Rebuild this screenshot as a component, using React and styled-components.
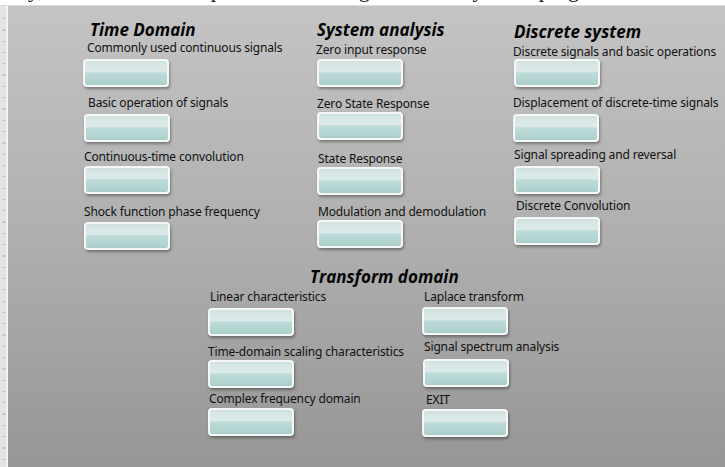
import styled, { createGlobalStyle } from "styled-components";

const GlobalStyle = createGlobalStyle`
  html, body {
    margin: 0;
    padding: 0;
    background: #ffffff;
  }
  body {
    font-family: "Noto Sans", "Liberation Sans", sans-serif;
  }
`;

const Page = styled.div`
  width: 725px;
  height: 467px;
  display: flex;
  flex-direction: column;
  overflow: hidden;
`;

// strip of document text cut off above the panel
const DocStrip = styled.div`
  height: 5px;
  flex: none;
  overflow: hidden;
  background: #ffffff;
  border-bottom: 1px solid #d9d9d9;
`;

const DocLine = styled.div`
  font-family: "Liberation Serif", serif;
  font-size: 22px;
  line-height: 22px;
  margin-top: -21px;
  margin-left: 22px;
  white-space: nowrap;
  word-spacing: 8px;
  color: #111;
`;

const Body = styled.div`
  flex: 1;
  display: flex;
  min-height: 0;
`;

const Ruler = styled.div`
  width: 6px;
  flex: none;
  border-right: 2px solid #f3f3f3;
  background:
    repeating-linear-gradient(
      to bottom,
      transparent 0px,
      transparent 10px,
      #c9c9c9 10px,
      #c9c9c9 11.3px
    ) 2px 2px / 4px 100% no-repeat,
    #e4e4e4;
`;

const Panel = styled.div`
  flex: 1;
  background: linear-gradient(to bottom, #c4c4c4 0%, #afafaf 50%, #969696 100%);
  padding: 14px 0 0 0;
  display: flex;
  flex-direction: column;
`;

const TopGrid = styled.div`
  display: grid;
  grid-template-columns: 233px 197px auto;
  padding-left: 75px;
`;

const Column = styled.div`
  display: flex;
  flex-direction: column;
  align-items: flex-start;
`;

const Title = styled.div`
  font-family: "Open Sans", "Liberation Sans", sans-serif;
  font-weight: 700;
  font-style: italic;
  font-size: 17px;
  line-height: 20px;
  color: #050505;
  white-space: nowrap;
  margin-left: ${(p) => p.$ml || 0}px;
  margin-top: ${(p) => p.$mt || 0}px;
`;

const Item = styled.div`
  display: flex;
  flex-direction: column;
  align-items: flex-start;
  margin-top: ${(p) => p.$mt}px;
`;

const Label = styled.div`
  font-size: 12px;
  line-height: 14px;
  letter-spacing: -0.15px;
  color: #111;
  white-space: nowrap;
  margin-left: ${(p) => p.$lx}px;
`;

const PanelButton = styled.button`
  box-sizing: border-box;
  width: 86px;
  height: 28px;
  padding: 0;
  margin-top: ${(p) => p.$gap}px;
  margin-left: ${(p) => p.$bx}px;
  border: 2px solid #f6f8f8;
  border-radius: 4px;
  background: linear-gradient(
    to bottom,
    #cfe1df 0%,
    #d8e8e6 20%,
    #dbeae8 44%,
    #bddbd8 50%,
    #b2d4d1 85%,
    #a9cdca 100%
  );
  box-shadow: 1px 2px 3px rgba(0, 0, 0, 0.35);
  cursor: pointer;
`;

const TransformSection = styled.div`
  margin-top: 17px;
  padding-left: 200px;
`;

const TransformGrid = styled.div`
  display: grid;
  grid-template-columns: 214px auto;
`;

const timeDomain = [
  { label: "Commonly used continuous signals", mt: 1, gap: 4, lx: 4, bx: 0 },
  { label: "Basic operation of signals", mt: 9, gap: 4, lx: 5, bx: 1 },
  { label: "Continuous-time convolution", mt: 8, gap: 2, lx: 1, bx: 1 },
  { label: "Shock function phase frequency", mt: 11, gap: 3, lx: 1, bx: 1 },
];

const systemAnalysis = [
  { label: "Zero input response", mt: 3, gap: 2, lx: 0, bx: 1 },
  { label: "Zero State Response", mt: 10, gap: 1, lx: 1, bx: 1 },
  { label: "State Response", mt: 12, gap: 1, lx: 2, bx: 1 },
  { label: "Modulation and demodulation", mt: 10, gap: 1, lx: 2, bx: 1 },
];

const discreteSystem = [
  { label: "Discrete signals and basic operations", mt: 3, gap: 0, lx: 0, bx: 1 },
  { label: "Displacement of discrete-time signals", mt: 9, gap: 4, lx: 0, bx: 0 },
  { label: "Signal spreading and reversal", mt: 6, gap: 4, lx: 1, bx: 1 },
  { label: "Discrete Convolution", mt: 5, gap: 4, lx: 3, bx: 1 },
];

const transformLeft = [
  { label: "Linear characteristics", mt: 3, gap: 4, lx: 2, bx: 0 },
  { label: "Time-domain scaling characteristics", mt: 9, gap: 1, lx: 0, bx: 0 },
  { label: "Complex frequency domain", mt: 4, gap: 2, lx: 1, bx: 0 },
];

const transformRight = [
  { label: "Laplace transform", mt: 3, gap: 3, lx: 2, bx: 0 },
  { label: "Signal spectrum analysis", mt: 5, gap: 5, lx: 2, bx: 1 },
  { label: "EXIT", mt: 6, gap: 2, lx: 4, bx: 0 },
];

function Control({ item }) {
  return (
    <Item $mt={item.mt}>
      <Label $lx={item.lx}>{item.label}</Label>
      <PanelButton $gap={item.gap} $bx={item.bx} title={item.label} />
    </Item>
  );
}

function Group({ items }) {
  return (
    <>
      {items.map((item) => (
        <Control key={item.label} item={item} />
      ))}
    </>
  );
}

export default function App() {
  return (
    <>
      <GlobalStyle />
      <Page>
        <DocStrip>
          <DocLine>
            ly, the main front panel of the signals and system program is shown in figure
          </DocLine>
        </DocStrip>
        <Body>
          <Ruler />
          <Panel>
            <TopGrid>
              <Column>
                <Title $ml={7}>Time Domain</Title>
                <Group items={timeDomain} />
              </Column>
              <Column>
                <Title $ml={1}>System analysis</Title>
                <Group items={systemAnalysis} />
              </Column>
              <Column>
                <Title $ml={1} $mt={2}>
                  Discrete system
                </Title>
                <Group items={discreteSystem} />
              </Column>
            </TopGrid>
            <TransformSection>
              <Title $ml={102}>Transform domain</Title>
              <TransformGrid>
                <Column>
                  <Group items={transformLeft} />
                </Column>
                <Column>
                  <Group items={transformRight} />
                </Column>
              </TransformGrid>
            </TransformSection>
          </Panel>
        </Body>
      </Page>
    </>
  );
}
